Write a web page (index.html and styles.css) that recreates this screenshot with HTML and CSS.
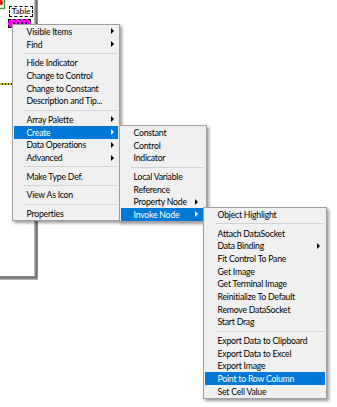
FILE: index.html
```html
<!DOCTYPE html>
<html>
<head>
<meta charset="utf-8">
<link rel="stylesheet" href="styles.css">
</head>
<body>
<div class="diagram">
  <svg class="wires" width="337" height="407" viewBox="0 0 337 407">
    <polyline points="36,0 36,278 0,278" fill="none" stroke="#b2b2b2" stroke-width="4"/>
    <polyline points="36.5,0 36.5,277.5 0,277.5" fill="none" stroke="#6e6e6e" stroke-width="2"/>
  </svg>
  <svg class="bool-icon" width="6" height="10" viewBox="0 0 6 10">
    <rect x="-6" y="-3" width="10.5" height="11.5" fill="#e8f5e0" stroke="#2e9a2e" stroke-width="1.2"/>
    <circle cx="0.5" cy="2.5" r="2.6" fill="#e02020"/>
  </svg>
  <div class="label">Table</div>
  <div class="terminal"><span class="glyph"></span></div>
  <div class="wire-yellow"></div>

  <ul class="menu menu-main">
    <li class="item sub">Visible Items</li>
    <li class="item sub">Find</li>
    <li class="sep"></li>
    <li class="item">Hide Indicator</li>
    <li class="item">Change to Control</li>
    <li class="item">Change to Constant</li>
    <li class="item">Description and Tip...</li>
    <li class="sep"></li>
    <li class="item sub">Array Palette</li>
    <li class="item sub hl">Create</li>
    <li class="item sub">Data Operations</li>
    <li class="item sub">Advanced</li>
    <li class="sep"></li>
    <li class="item">Make Type Def.</li>
    <li class="sep"></li>
    <li class="item">View As Icon</li>
    <li class="sep"></li>
    <li class="item">Properties</li>
  </ul>

  <ul class="menu menu-create">
    <li class="item">Constant</li>
    <li class="item">Control</li>
    <li class="item">Indicator</li>
    <li class="sep"></li>
    <li class="item">Local Variable</li>
    <li class="item">Reference</li>
    <li class="item sub">Property Node</li>
    <li class="item sub hl">Invoke Node</li>
  </ul>

  <ul class="menu menu-invoke">
    <li class="item">Object Highlight</li>
    <li class="sep"></li>
    <li class="item">Attach DataSocket</li>
    <li class="item sub">Data Binding</li>
    <li class="item">Fit Control To Pane</li>
    <li class="item">Get Image</li>
    <li class="item">Get Terminal Image</li>
    <li class="item">Reinitialize To Default</li>
    <li class="item">Remove DataSocket</li>
    <li class="item">Start Drag</li>
    <li class="sep"></li>
    <li class="item">Export Data to Clipboard</li>
    <li class="item">Export Data to Excel</li>
    <li class="item">Export Image</li>
    <li class="item hl">Point to Row Column</li>
    <li class="item">Set Cell Value</li>
  </ul>
</div>
</body>
</html>
```

FILE: styles.css
```css
html, body {
  margin: 0;
  padding: 0;
  background: #ffffff;
}

.diagram {
  position: relative;
  width: 337px;
  height: 407px;
  overflow: hidden;
  font-family: "Lato", "Noto Sans", sans-serif;
  color: #000;
}

.wires {
  position: absolute;
  left: 0;
  top: 0;
}

.bool-icon {
  position: absolute;
  left: 0;
  top: 0;
}

.label {
  position: absolute;
  left: 9px;
  top: 6px;
  width: 24px;
  height: 11px;
  box-sizing: border-box;
  border: 1px dashed #000;
  background: #fff;
  font-size: 8.3px;
  line-height: 9px;
  letter-spacing: -0.1px;
  text-align: center;
}

.terminal {
  position: absolute;
  left: 8px;
  top: 19px;
  width: 23px;
  height: 9px;
  box-sizing: border-box;
  border: 1px dashed #000;
  background: #ff00ff;
  display: flex;
  justify-content: center;
  padding-top: 2px;
}

.terminal .glyph {
  width: 14px;
  height: 3px;
  background: repeating-linear-gradient(to right, #300030 0 2px, #ff00ff 2px 4px);
}

.wire-yellow {
  position: absolute;
  left: 0;
  top: 83px;
  width: 13px;
  height: 2px;
  background: repeating-linear-gradient(to right, #c9c200 0 2px, #2a2a00 2px 3px);
}

.menu {
  position: absolute;
  margin: 0;
  padding: 0;
  list-style: none;
  box-sizing: border-box;
  background: #f0f0f0;
  border: 1px solid #a0a0a0;
  box-shadow: 2px 2px 3px rgba(0, 0, 0, 0.4);
  display: flex;
  flex-direction: column;
  font-size: 8.7px;
  letter-spacing: -0.22px;
}

.menu-main {
  left: 12px;
  top: 24px;
  width: 108px;
}

.menu-create {
  left: 119px;
  top: 125px;
  width: 88px;
}

.menu-invoke {
  left: 203px;
  top: 207px;
  width: 124px;
}

.item {
  height: 12.7px;
  margin: 0 1px;
  padding-left: 12.5px;
  display: flex;
  align-items: center;
  white-space: nowrap;
}

.item.sub::after {
  content: "";
  margin-left: auto;
  margin-right: 5px;
  border-left: 3px solid #000;
  border-top: 3px solid transparent;
  border-bottom: 3px solid transparent;
}

.menu-main .item.sub::after {
  margin-right: 4px;
}

.menu-create .item.sub::after {
  margin-right: 7px;
}

.item.hl {
  background: #0078d7;
  color: #fff;
}

.item.hl::after {
  border-left-color: #fff;
}

.sep {
  height: 6px;
  display: flex;
  align-items: center;
  padding: 0 2px 0 11px;
}

.sep::before {
  content: "";
  flex: 1;
  height: 1px;
  background: #d2d2d2;
}
```
